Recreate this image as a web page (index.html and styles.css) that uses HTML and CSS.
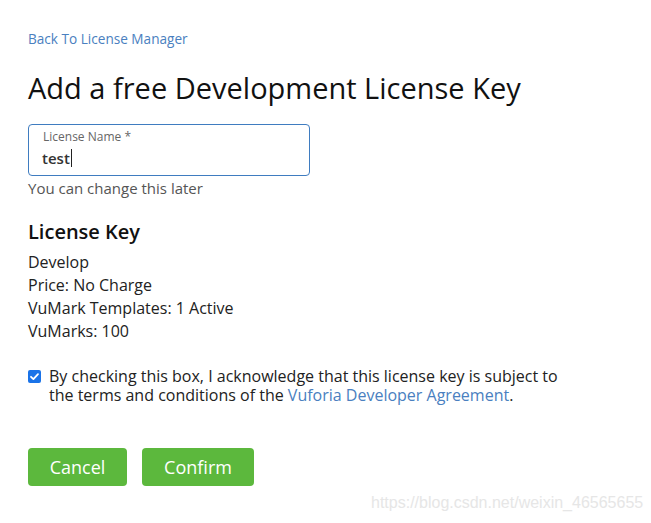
FILE: index.html
```html
<!DOCTYPE html>
<html>
<head>
<meta charset="utf-8">
<link rel="stylesheet" href="styles.css">
</head>
<body>
<div class="page">
  <a class="back" href="#">Back To License Manager</a>
  <h1 class="title">Add a free Development License Key</h1>
  <div class="field">
    <label class="field-label">License Name *</label>
    <div class="field-value">test<span class="caret"></span></div>
  </div>
  <div class="hint">You can change this later</div>
  <h2 class="subtitle">License Key</h2>
  <div class="details">
    <div>Develop</div>
    <div>Price: No Charge</div>
    <div>VuMark Templates: 1 Active</div>
    <div>VuMarks: 100</div>
  </div>
  <div class="agree">
    <span class="check"><svg viewBox="0 0 13 13" width="13" height="13"><rect x="0" y="0" width="13" height="13" rx="2" fill="#1a73e8"/><path d="M3 6.8 L5.4 9.1 L10 4.2" fill="none" stroke="#fff" stroke-width="1.8" stroke-linecap="round" stroke-linejoin="round"/></svg></span>
    <p class="agree-text">By checking this box, I acknowledge that this license key is subject to the terms and conditions of the <a href="#">Vuforia Developer Agreement</a>.</p>
  </div>
  <div class="actions">
    <button class="btn btn-cancel">Cancel</button>
    <button class="btn btn-confirm">Confirm</button>
  </div>
</div>
<div class="watermark">https://blog.csdn.net/weixin_46565655</div>
</body>
</html>
```
FILE: styles.css
```css
html, body {
  margin: 0;
  padding: 0;
  background: #fff;
}
body {
  font-family: "Open Sans", "Noto Sans", sans-serif;
  color: #222;
  width: 651px;
  height: 523px;
  position: relative;
  overflow: hidden;
}
.page {
  padding: 29px 0 0 28px;
}
.back {
  display: block;
  font-size: 13.6px;
  line-height: 20px;
  color: #4a80c0;
  text-decoration: none;
}
.title {
  margin: 19px 0 0 0;
  font-size: 29px;
  line-height: 40px;
  font-weight: 500;
  color: #111;
}
.field {
  margin-top: 16px;
  width: 280px;
  height: 50px;
  border: 1px solid #3f7cc0;
  border-radius: 4px;
  padding: 0;
  box-sizing: content-box;
}
.field-label {
  display: block;
  margin: 4px 0 0 14px;
  font-size: 12px;
  line-height: 16px;
  color: #666;
}
.field-value {
  margin: 3px 0 0 13px;
  font-size: 15px;
  line-height: 20px;
  font-weight: 600;
  color: #333;
  display: flex;
  align-items: center;
}
.caret {
  display: inline-block;
  width: 1px;
  height: 18px;
  background: #222;
  margin-left: 1px;
}
.hint {
  margin-top: 2px;
  font-size: 15px;
  line-height: 20px;
  color: #555;
}
.subtitle {
  margin: 21px 0 0 0;
  font-size: 20px;
  line-height: 26px;
  font-weight: 600;
  color: #111;
}
.details {
  margin-top: 6px;
  font-size: 16px;
  line-height: 23px;
  color: #222;
}
.agree {
  margin-top: 24px;
  display: flex;
  align-items: flex-start;
  gap: 8px;
}
.check {
  display: block;
  width: 13px;
  height: 13px;
  margin-top: 3px;
}
.check svg {
  display: block;
}
.agree-text {
  margin: 0;
  width: 530px;
  font-size: 16px;
  line-height: 19px;
  color: #222;
}
.agree-text a {
  color: #4a80c0;
  text-decoration: none;
}
.actions {
  margin-top: 43px;
  display: flex;
  gap: 15px;
}
.btn {
  height: 38px;
  border: none;
  border-radius: 4px;
  background: #5cb83d;
  color: #fff;
  font-family: "Open Sans", "Noto Sans", sans-serif;
  font-size: 18px;
  padding: 0;
}
.btn-cancel { width: 99px; }
.btn-confirm { width: 112px; }
.watermark {
  position: absolute;
  left: 371px;
  top: 494px;
  font-family: "Liberation Sans", Arial, sans-serif;
  font-size: 16px;
  color: #e6e6e6;
}
```
